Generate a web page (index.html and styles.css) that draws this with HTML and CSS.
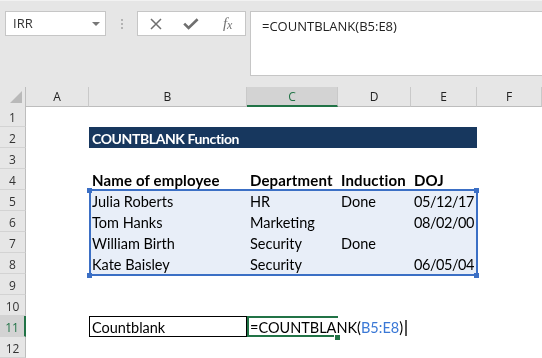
FILE: index.html
```html
<!DOCTYPE html>
<html lang="en">
<head>
    <meta charset="UTF-8">
    <title>COUNTBLANK</title>
    <link rel="stylesheet" href="styles.css">
</head>
<body>
    <!-- Barra de fórmulas -->
    <div class="toolbar">
        <div class="namebox"><span>IRR</span><span class="caret"></span></div>
        <div class="grip"><i></i><i></i><i></i></div>
        <div class="fnbox">
            <span class="fn-icon">
                <svg width="12" height="12" viewBox="0 0 12 12"><path d="M1 1L11 11M11 1L1 11" stroke="#6f6f6f" stroke-width="1.5" fill="none"/></svg>
            </span>
            <span class="fn-icon">
                <svg width="16" height="12" viewBox="0 0 16 12"><path d="M1.2 5.6L5.6 10L14.6 1.2" stroke="#6f6f6f" stroke-width="2.6" fill="none"/></svg>
            </span>
            <span class="fn-icon fx"><i>f</i><i class="x">x</i></span>
        </div>
        <div class="formula">=COUNTBLANK(B5:E8)</div>
    </div>

    <!-- Planilha -->
    <div class="sheet">
        <div class="row hdr">
            <div class="ch corner">
                <svg width="26" height="19" viewBox="0 0 26 19"><polygon points="22,4 22,16 10,16" fill="#b9b9b9"/></svg>
            </div>
            <div class="ch">A</div>
            <div class="ch">B</div>
            <div class="ch sel">C</div>
            <div class="ch">D</div>
            <div class="ch">E</div>
            <div class="ch">F</div>
        </div>
        <div class="row"><div class="rh">1</div></div>
        <div class="row">
            <div class="rh">2</div><div></div>
            <div class="c banner">COUNTBLANK Function</div>
        </div>
        <div class="row"><div class="rh">3</div></div>
        <div class="row">
            <div class="rh">4</div><div></div>
            <div class="c b">Name of employee</div>
            <div class="c b">Department</div>
            <div class="c b">Induction</div>
            <div class="c b">DOJ</div>
        </div>
        <div class="row">
            <div class="rh">5</div><div></div>
            <div class="c">Julia Roberts</div>
            <div class="c">HR</div>
            <div class="c">Done</div>
            <div class="c r">05/12/17</div>
        </div>
        <div class="row">
            <div class="rh">6</div><div></div>
            <div class="c">Tom Hanks</div>
            <div class="c">Marketing</div>
            <div class="c"></div>
            <div class="c r">08/02/00</div>
        </div>
        <div class="row">
            <div class="rh">7</div><div></div>
            <div class="c">William Birth</div>
            <div class="c">Security</div>
            <div class="c">Done</div>
            <div class="c r"></div>
        </div>
        <div class="row">
            <div class="rh">8</div><div></div>
            <div class="c">Kate Baisley</div>
            <div class="c">Security</div>
            <div class="c"></div>
            <div class="c r">06/05/04</div>
        </div>
        <div class="row"><div class="rh">9</div></div>
        <div class="row"><div class="rh">10</div></div>
        <div class="row">
            <div class="rh sel">11</div><div></div>
            <div class="c boxed">Countblank</div>
            <div class="c active">=COUNTBLANK(<span class="ref">B5:E8</span>)<span class="cursor"></span></div>
        </div>
        <div class="row"><div class="rh">12</div></div>

        <!-- Intervalo referenciado B5:E8 -->
        <div class="range"><i class="tl"></i><i class="tr"></i><i class="bl"></i><i class="br"></i></div>
    </div>
</body>
</html>
```

FILE: styles.css
```css
* {
    box-sizing: border-box;
}
body {
    margin: 0;
    width: 542px;
    height: 358px;
    overflow: hidden;
    background: #fff;
    font-family: "Lato", sans-serif;
}

/* barra de fórmulas */
.toolbar {
    display: flex;
    align-items: flex-start;
    height: 87px;
    padding-top: 10px;
    background: #e6e6e6;
    border-top: 1px solid #f2f2f2;
}
.namebox {
    display: flex;
    align-items: center;
    justify-content: space-between;
    width: 101px;
    height: 25px;
    margin-left: 5px;
    padding: 0 5px 0 7px;
    background: #fff;
    border: 1px solid #c6c6c6;
    font: 13px/23px "Open Sans", sans-serif;
    color: #333;
}
.caret {
    width: 0;
    height: 0;
    border-left: 4px solid transparent;
    border-right: 4px solid transparent;
    border-top: 4px solid #777;
}
.grip {
    display: flex;
    flex-direction: column;
    align-items: center;
    justify-content: center;
    gap: 2px;
    width: 31px;
    height: 25px;
}
.grip i {
    width: 2px;
    height: 2px;
    background: #b3b3b3;
}
.fnbox {
    display: flex;
    align-items: center;
    width: 109px;
    height: 25px;
    background: #fff;
    border: 1px solid #c6c6c6;
}
.fn-icon {
    display: flex;
    justify-content: center;
    align-items: center;
    width: 36px;
}
.fx {
    padding-left: 1px;
    font: italic 15px "Liberation Serif", serif;
    color: #737373;
}
.fx .x {
    font-size: 12px;
    margin-top: 3px;
}
.formula {
    flex: 1;
    height: 65px;
    margin-left: 4px;
    padding: 5px 0 0 11px;
    background: #fff;
    border: 1px solid #c6c6c6;
    border-right: none;
    font: 13px/18px "Open Sans", sans-serif;
    color: #222;
}

/* planilha */
.sheet {
    position: relative;
}
.row {
    display: grid;
    grid-template-columns: 26px 63px 158px 91px 73px 66px 65px;
    height: 21px;
}
.row.hdr {
    height: 19px;
}
.ch {
    padding-top: 1px;
    background: #e6e6e6;
    border-right: 1px solid #c9c9c9;
    border-bottom: 1px solid #bdbdbd;
    text-align: center;
    font: 12px/17px "Open Sans", sans-serif;
    color: #222;
}
.ch.corner {
    padding: 0;
    line-height: 0;
    border-right-color: #bdbdbd;
}
.ch.sel {
    background: #d3d3d3;
    border-bottom: 2px solid #217346;
    color: #217346;
}
.rh {
    padding-top: 4px;
    background: #e6e6e6;
    border-right: 1px solid #bdbdbd;
    border-bottom: 1px solid #d3d3d3;
    text-align: center;
    font: 12px/16px "Open Sans", sans-serif;
    color: #333;
}
.rh.sel {
    background: #d3d3d3;
    border-right: 2px solid #217346;
    color: #217346;
}
.c {
    padding: 3px 3px 0;
    font-size: 14.5px;
    line-height: 17px;
    white-space: nowrap;
    color: #000;
}
.b {
    font-size: 15px;
    font-weight: 700;
    letter-spacing: 0.15px;
}
.r {
    text-align: right;
    letter-spacing: -0.45px;
}
.banner {
    grid-column: 3 / 7;
    background: #17375e;
    color: #fff;
    font-size: 14px;
    font-weight: 700;
    letter-spacing: -0.4px;
}
.boxed {
    padding: 2px 2px 0;
    border: 1px solid #000;
}
.active {
    position: relative;
    padding: 1px 0 0 1px;
    border-top: 2px solid #217346;
    border-left: 2px solid #217346;
    overflow: visible;
}
.active::after {
    content: "";
    position: absolute;
    left: -2px;
    bottom: 0;
    width: 87px;
    height: 2px;
    background: #217346;
}
.active::before {
    content: "";
    position: absolute;
    left: 86px;
    bottom: -3px;
    width: 5px;
    height: 5px;
    background: #217346;
}
.ref {
    color: #3a78d6;
}
.cursor {
    display: inline-block;
    width: 2px;
    height: 16px;
    margin-left: 2px;
    vertical-align: -3px;
    background: #555;
}

/* destaque do intervalo */
.range {
    position: absolute;
    left: 89px;
    top: 102px;
    width: 389px;
    height: 87px;
    border: 2px solid #3b6fc5;
    background: #e8eef8;
    mix-blend-mode: multiply;
}
.range i {
    position: absolute;
    width: 5px;
    height: 5px;
    background: #3b6fc5;
}
.range .tl { left: -4px; top: -3px; }
.range .tr { right: -3px; top: -3px; }
.range .bl { left: -4px; bottom: -4px; }
.range .br { right: -3px; bottom: -4px; }
```
